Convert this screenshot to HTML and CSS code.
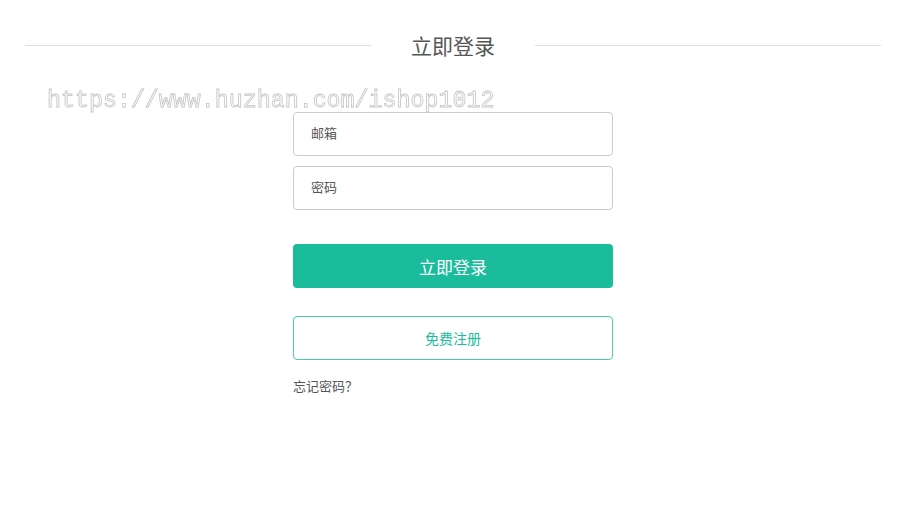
FILE: index.html
```html
<!DOCTYPE html>
<html lang="zh">
<head>
<meta charset="utf-8">
<title>立即登录</title>
<link rel="stylesheet" href="styles.css">
</head>
<body>
<div class="page">
  <div class="title-row">
    <span class="line"></span>
    <h1 class="title">立即登录</h1>
    <span class="line"></span>
  </div>
  <form class="form">
    <input class="field" type="text" placeholder="邮箱">
    <input class="field" type="password" placeholder="密码">
    <button class="btn-login" type="button">立即登录</button>
    <button class="btn-register" type="button">免费注册</button>
    <a class="forgot" href="#">忘记密码？</a>
  </form>
  <div class="watermark">https://www.huzhan.com/ishop1012</div>
</div>
</body>
</html>
```

FILE: styles.css
```css
html, body {
  margin: 0;
  padding: 0;
  background: #fff;
}
body {
  font-family: "Noto Sans CJK SC", "Noto Sans", sans-serif;
  color: #555;
}
.page {
  position: relative;
  padding: 0 19px 0 25px;
  height: 530px;
  box-sizing: border-box;
}
.title-row {
  display: flex;
  align-items: center;
  gap: 40px;
  padding-top: 31px;
  height: 28px;
}
.line {
  flex: 1;
  height: 1px;
  background: #ddd;
  margin-top: 1px;
}
.title {
  margin: 0;
  font-size: 21px;
  font-weight: normal;
  color: #555;
  line-height: 28px;
}
.form {
  width: 320px;
  margin: 53px auto 0;
  display: flex;
  flex-direction: column;
}
.field {
  height: 44px;
  box-sizing: border-box;
  border: 1px solid #ccc;
  border-radius: 4px;
  padding: 0 17px 3px;
  font-family: "Noto Sans CJK SC", sans-serif;
  font-size: 13px;
  color: #555;
  outline: none;
  margin-bottom: 10px;
}
.field::placeholder {
  color: #555;
}
.btn-login {
  margin-top: 24px;
  height: 44px;
  border: none;
  border-radius: 4px;
  background: #1abc9c;
  color: #fff;
  font-family: "Noto Sans CJK SC", sans-serif;
  font-size: 17px;
  cursor: pointer;
}
.btn-register {
  margin-top: 28px;
  height: 44px;
  border: 1px solid #48c9b0;
  border-radius: 4px;
  background: #fff;
  color: #1abc9c;
  font-family: "Noto Sans CJK SC", sans-serif;
  font-size: 14px;
  cursor: pointer;
}
.forgot {
  margin-top: 17px;
  font-size: 13px;
  color: #555;
  text-decoration: none;
  line-height: 18px;
}
.watermark {
  position: absolute;
  left: 47px;
  top: 86px;
  font-family: "Liberation Mono", monospace;
  font-size: 23.3px;
  line-height: 30px;
  color: #fff;
  -webkit-text-stroke: 0.8px #c4c4c4;
  pointer-events: none;
  white-space: nowrap;
  will-change: transform;
}
```
